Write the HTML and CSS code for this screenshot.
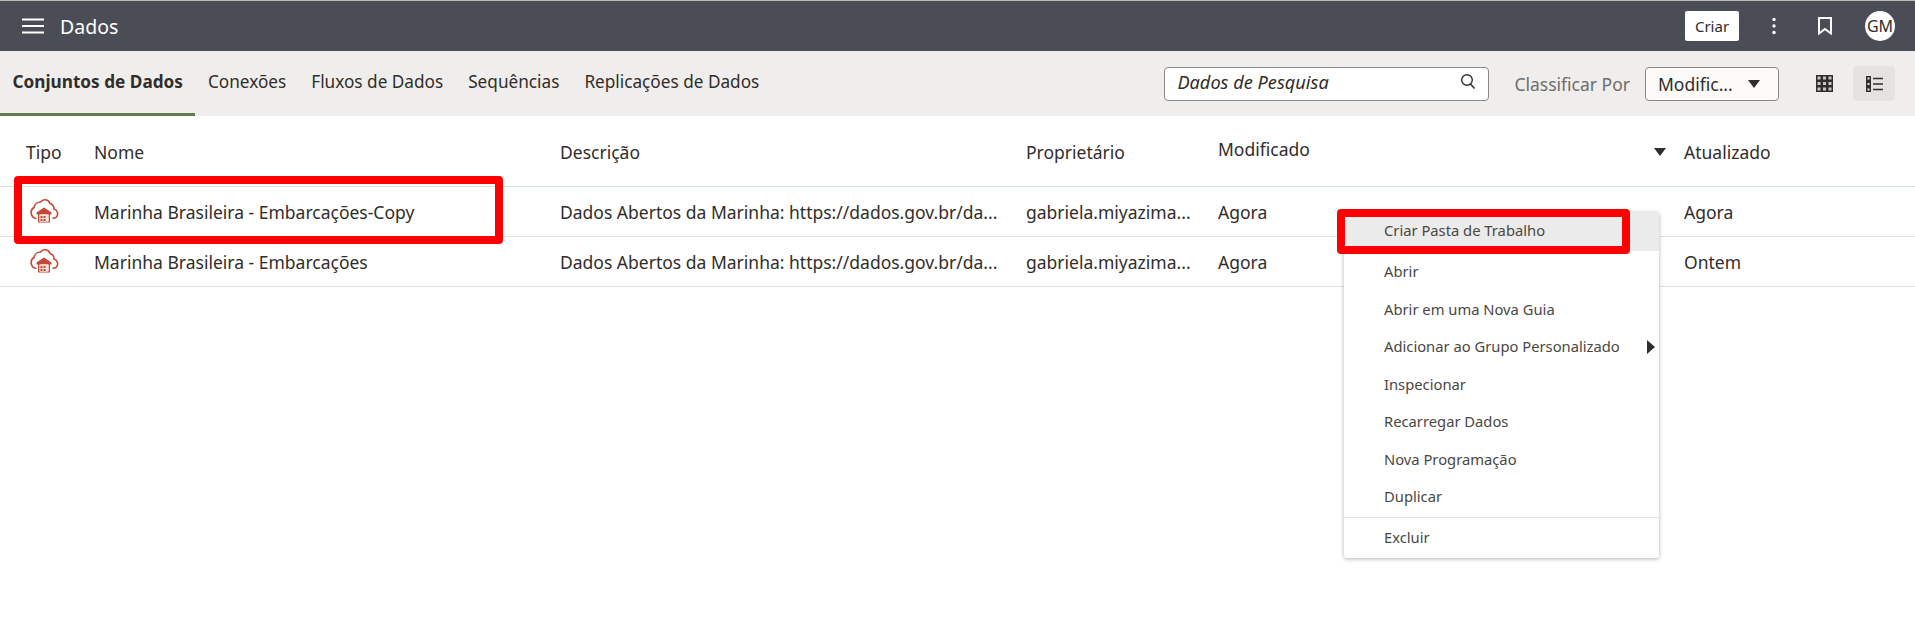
FILE: index.html
```html
<!DOCTYPE html>
<html lang="pt-BR">
<head>
    <meta charset="UTF-8">
    <meta name="viewport" content="width=device-width, initial-scale=1.0">
    <title>Dados</title>
    <link rel="stylesheet" href="styles.css">
</head>
<body>
    <svg class="icon-defs" width="0" height="0">
        <symbol id="cloud" viewBox="0 0 30 25">
            <path d="M7.500 20.500H7A6 6 0 0 1 5 9.500 A6.500 6.500 0 0 1 11.500 4 C14 0.500 19.500 1 21 5.500 A5.500 5.500 0 0 1 25 11 A5 5 0 0 1 27 19.500 L23.500 20.500" fill="none" stroke="#c74634" stroke-width="1.600"/>
            <path d="M15 9.500L7.500 14.500V16.500H22.500V14.500Z" fill="#c74634"/>
            <path d="M9 16H10.500V24.500H9ZM19.500 16H21V24.500H19.500ZM9 23.500H21V24.500H9Z" fill="#c74634"/>
            <path d="M10.500 16.500H19.500V23.500H10.500Z" fill="#f6e3de"/>
            <path d="M11.500 18H13.500V20H11.500ZM14.500 18H16.500V20H14.500ZM11.500 21H13.500V23H11.500ZM14.500 21H16.500V23H14.500Z" fill="#c74634"/>
        </symbol>
    </svg>

    <header class="topbar">
        <div class="topbar-left">
            <svg class="hamburger" width="22" height="16" viewBox="0 0 22 16"><path d="M0 1.500H22M0 8H22M0 14.500H22" stroke="#fff" stroke-width="2.200"/></svg>
            <span class="app-title">Dados</span>
        </div>
        <div class="topbar-right">
            <button class="create-btn">Criar</button>
            <svg class="kebab" width="4" height="18" viewBox="0 0 4 18"><circle cx="2" cy="2.500" r="1.700"/><circle cx="2" cy="9" r="1.700"/><circle cx="2" cy="15.500" r="1.700"/></svg>
            <svg class="bookmark" width="14" height="18" viewBox="0 0 14 18"><path d="M1 1H13V16.500L7 12L1 16.500Z" fill="none" stroke="#fff" stroke-width="2"/></svg>
            <span class="avatar">GM</span>
        </div>
    </header>

    <nav class="toolbar">
        <div class="tabs">
            <a class="tab active">Conjuntos de Dados</a>
            <a class="tab">Conexões</a>
            <a class="tab">Fluxos de Dados</a>
            <a class="tab">Sequências</a>
            <a class="tab">Replicações de Dados</a>
        </div>
        <div class="tools">
            <div class="search">
                <span>Dados de Pesquisa</span>
                <svg width="16" height="17" viewBox="0 0 16 17"><circle cx="7" cy="7" r="5.300" fill="none" stroke="#312d2a" stroke-width="1.400"/><path d="M10.500 11L14.500 15.500" stroke="#312d2a" stroke-width="1.500"/></svg>
            </div>
            <span class="sort-label">Classificar Por</span>
            <div class="sort-select">
                <span>Modific...</span>
                <i class="caret"></i>
            </div>
            <svg class="grid-view" width="17" height="17" viewBox="0 0 17 17"><path d="M0 0H17V17H0Z" fill="#312d2a"/><path d="M1.500 1.500H4.500V4.500H1.500ZM7 1.500H10V4.500H7ZM12.500 1.500H15.500V4.500H12.500ZM1.500 7H4.500V10H1.500ZM7 7H10V10H7ZM12.500 7H15.500V10H12.500ZM1.500 12.500H4.500V15.500H1.500ZM7 12.500H10V15.500H7ZM12.500 12.500H15.500V15.500H12.500Z" fill="#c9c7c3"/></svg>
            <div class="list-view">
                <svg width="17" height="16" viewBox="0 0 17 16"><path d="M0 0H5V16H0Z" fill="#312d2a"/><path d="M1.500 1.500H3.500V3.500H1.500ZM1.500 7H3.500V9H1.500ZM1.500 12.500H3.500V14.500H1.500Z" fill="#e4e3df"/><path d="M7 2.500H17M7 8H17M7 13.500H17" stroke="#312d2a" stroke-width="1.500"/></svg>
            </div>
        </div>
    </nav>

    <main class="table">
        <div class="row head">
            <div class="cell">Tipo</div>
            <div class="cell">Nome</div>
            <div class="cell">Descrição</div>
            <div class="cell">Proprietário</div>
            <div class="cell sorted"><span class="sorted-label">Modificado</span><i class="sort-arrow"></i></div>
            <div class="cell">Atualizado</div>
        </div>
        <div class="row">
            <div class="cell"><svg class="type-icon" width="30" height="25"><use href="#cloud"/></svg></div>
            <div class="cell">Marinha Brasileira - Embarcações-Copy</div>
            <div class="cell clip">Dados Abertos da Marinha: https://dados.gov.br/da...</div>
            <div class="cell clip">gabriela.miyazima...</div>
            <div class="cell">Agora</div>
            <div class="cell">Agora</div>
        </div>
        <div class="row">
            <div class="cell"><svg class="type-icon" width="30" height="25"><use href="#cloud"/></svg></div>
            <div class="cell">Marinha Brasileira - Embarcações</div>
            <div class="cell clip">Dados Abertos da Marinha: https://dados.gov.br/da...</div>
            <div class="cell clip">gabriela.miyazima...</div>
            <div class="cell">Agora</div>
            <div class="cell">Ontem</div>
        </div>
    </main>

    <ul class="menu">
        <li class="item first">Criar Pasta de Trabalho</li>
        <li class="item">Abrir</li>
        <li class="item">Abrir em uma Nova Guia</li>
        <li class="item has-sub">Adicionar ao Grupo Personalizado<i class="sub-arrow"></i></li>
        <li class="item">Inspecionar</li>
        <li class="item">Recarregar Dados</li>
        <li class="item">Nova Programação</li>
        <li class="item">Duplicar</li>
        <li class="item last">Excluir</li>
    </ul>

    <!-- marcacoes vermelhas -->
    <div class="mark mark-row"></div>
    <div class="mark mark-menu"></div>
</body>
</html>
```

FILE: styles.css
```css
body {
    font-family: "Noto Sans", "Open Sans", sans-serif;
    font-size: 17.500px;
    margin: 0;
    padding: 0;
    height: 627px;
    overflow: hidden;
    background-color: #fff;
    color: #312d2a;
    position: relative;
}

.icon-defs {
    position: absolute;
}

/* barra superior */
.topbar {
    height: 50px;
    margin-top: 1px;
    background-color: #4a4d55;
    box-shadow: 0 -1px 0 #b9b9b9;
    display: flex;
    align-items: center;
    justify-content: space-between;
    padding: 0 20px 0 22px;
}

.topbar-left {
    display: flex;
    align-items: center;
}

.app-title {
    color: #fff;
    font-size: 19.500px;
    margin-left: 16px;
}

.topbar-right {
    display: flex;
    align-items: center;
}

.create-btn {
    width: 54px;
    height: 30px;
    padding: 0;
    border: none;
    border-radius: 2px;
    background-color: #fff;
    color: #312d2a;
    font-family: inherit;
    font-size: 15px;
}

.kebab {
    fill: #fff;
    margin-left: 33px;
}

.bookmark {
    margin-left: 42px;
}

.avatar {
    width: 30px;
    height: 30px;
    margin-left: 33px;
    border-radius: 50%;
    background-color: #fff;
    font-size: 16px;
    line-height: 30px;
    text-align: center;
}

/* abas e ferramentas */
.toolbar {
    height: 65px;
    background-color: #f0eeec;
    display: flex;
    justify-content: space-between;
    padding-right: 20px;
}

.tabs {
    display: flex;
    font-size: 17.200px;
}

.tab {
    padding: 15px 12.500px 0;
    line-height: 32px;
    box-sizing: border-box;
    height: 65px;
}

.tab.active {
    font-weight: 700;
    border-bottom: 3px solid #5f7d4f;
}

.tools {
    display: flex;
    align-items: center;
}

.search {
    width: 325px;
    height: 34px;
    box-sizing: border-box;
    border: 1px solid #8b8885;
    border-radius: 4px;
    background-color: #fff;
    font-size: 18.200px;
    font-style: italic;
    display: flex;
    align-items: center;
    justify-content: space-between;
    padding: 0 12px;
}

.search span {
    margin-top: -4px;
}

.search svg {
    flex: none;
    margin-top: -4px;
}

.sort-label {
    margin-left: 25px;
    color: #6f6c69;
}

.sort-select {
    width: 134px;
    height: 34px;
    margin-left: 15px;
    box-sizing: border-box;
    border: 1px solid #8b8885;
    border-radius: 4px;
    background-color: #fcfbfa;
    display: flex;
    align-items: center;
    justify-content: space-between;
    padding: 0 18px 0 12px;
}

.caret {
    border-left: 6px solid transparent;
    border-right: 6px solid transparent;
    border-top: 8px solid #312d2a;
}

.grid-view {
    margin-left: 37px;
}

.list-view {
    width: 42px;
    height: 35px;
    margin-left: 20px;
    border-radius: 4px;
    background-color: #e4e3df;
    display: flex;
    align-items: center;
    justify-content: center;
}

/* tabela */
.row {
    display: grid;
    grid-template-columns: 94px 466px 466px 192px 466px 1fr;
    height: 50px;
    align-items: center;
    border-bottom: 1px solid #dfe1e1;
    box-sizing: border-box;
    white-space: nowrap;
}

.row.head {
    height: 71px;
    padding-top: 2px;
    border-bottom-color: #d5dfe6;
}

.cell:first-child {
    padding-left: 26px;
}

.type-icon {
    display: block;
    margin-left: 3px;
    margin-top: -2px;
}

.sorted {
    display: flex;
    align-items: center;
    justify-content: space-between;
    padding-right: 18px;
}

.sorted-label {
    margin-top: -6px;
}

.sort-arrow {
    border-left: 6px solid transparent;
    border-right: 6px solid transparent;
    border-top: 8px solid #312d2a;
}

/* menu de contexto */
.menu {
    position: absolute;
    left: 1344px;
    top: 212px;
    width: 315px;
    height: 346px;
    box-sizing: border-box;
    margin: 0;
    padding: 0;
    list-style: none;
    background-color: #fff;
    border-radius: 3px;
    box-shadow: 0 1px 4px rgba(0, 0, 0, 0.3);
    font-size: 14.750px;
    color: #4a4744;
}

.item {
    height: 37.500px;
    line-height: 37.500px;
    padding-left: 40px;
    position: relative;
}

.item.first {
    height: 39px;
    line-height: 36px;
    background-color: #ebebeb;
    border-bottom: 2px solid #fff;
    border-radius: 3px 3px 0 0;
}

.item.last {
    border-top: 1px solid #dfdfdf;
    margin-top: 1px;
    padding-top: 1px;
}

.sub-arrow {
    position: absolute;
    right: 4px;
    top: 12px;
    border-top: 7px solid transparent;
    border-bottom: 7px solid transparent;
    border-left: 8px solid #312d2a;
}

/* marcacoes */
.mark {
    position: absolute;
    box-sizing: border-box;
    border: 8px solid #f00;
    border-radius: 4px;
}

.mark-row {
    left: 14px;
    top: 176px;
    width: 489px;
    height: 68px;
}

.mark-menu {
    left: 1337px;
    top: 209px;
    width: 293px;
    height: 45px;
}
```
